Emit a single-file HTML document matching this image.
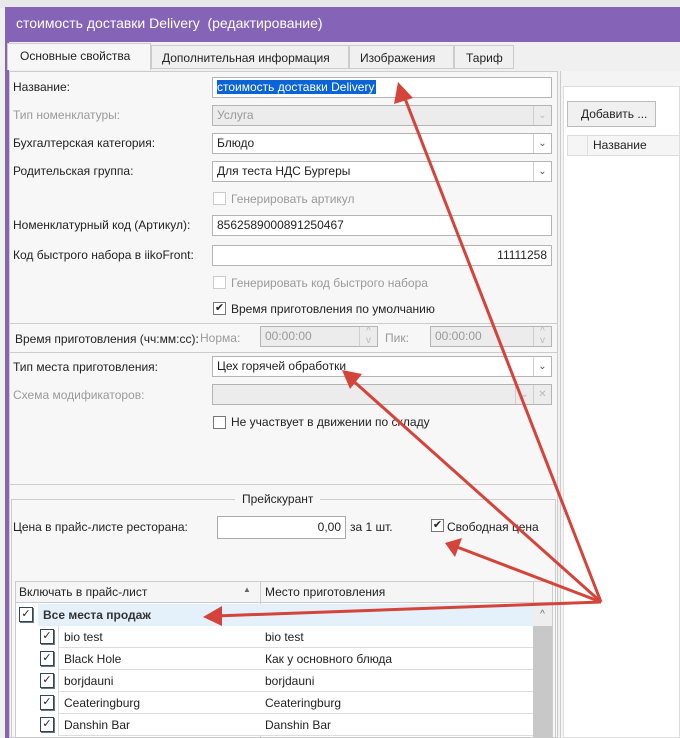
<!DOCTYPE html>
<html><head><meta charset="utf-8"><style>
*{box-sizing:border-box;margin:0;padding:0}
body{width:680px;height:738px;overflow:hidden;background:#f0f0f0;font-family:"Liberation Sans","DejaVu Sans",sans-serif;font-size:12px;color:#222;position:relative}
.a{position:absolute}
.lbl{position:absolute;left:13px;font-size:12px}
.dis{color:#9a9a9a}
.f{position:absolute;left:212px;width:340px;height:21px;border:1px solid #b4b4b4;background:#fff;padding:2px 4px;font-size:12px}
.f.g{background:#ececec;color:#999}
.dd{position:absolute;right:0;top:0;width:18px;height:19px;border-left:1px solid #d0d0d0;font-size:10px;color:#555;text-align:center;line-height:19px}
.cb{position:absolute;width:13px;height:13px;border:1px solid #777;background:#fff;font-size:11px;line-height:11px;text-align:center;color:#222}
.cb.d{border-color:#ccc}
.gcb{position:absolute;width:14px;height:15px;border:1px solid #345;background:#fff;font-size:11px;line-height:13px;text-align:center;font-weight:bold;box-shadow:1px 1px 0 #678}
.row{position:absolute;left:58px;width:475px;height:22px;border-bottom:1px solid #ddd;border-left:1px solid #ddd;background:#fff}
.row span{position:absolute;top:4px}
</style></head><body>
<div class="a" style="left:0;top:0;width:680px;height:8px;background:#e8e8e8"></div>
<div class="a" style="left:5px;top:7px;width:675px;height:35px;background:#8563b6"></div>
<div class="a" style="left:5px;top:7px;width:4px;height:731px;background:#8563b6"></div>
<div class="a" style="left:16px;top:15px;color:#fff;font-size:14px">стоимость доставки Delivery&nbsp; (редактирование)</div>
<div class="a" style="left:9px;top:42px;width:671px;height:696px;background:#f0f0f0"></div>
<div class="a" style="left:7px;top:43px;width:144px;height:27px;background:#f7f7f7;border:1px solid #ccc;border-bottom:none;padding:5px 0 0 12px">Основные свойства</div>
<div class="a" style="left:151px;top:45px;width:198px;height:24px;border:1px solid #ccc;padding:5px 0 0 10px">Дополнительная информация</div>
<div class="a" style="left:349px;top:45px;width:105px;height:24px;border:1px solid #ccc;padding:5px 0 0 10px">Изображения</div>
<div class="a" style="left:454px;top:45px;width:60px;height:24px;border:1px solid #ccc;padding:5px 0 0 11px">Тариф</div>
<div class="a" style="left:9px;top:71px;width:549px;height:667px;background:#f7f7f7;border:1px solid #ccc"></div>
<div class="a" style="left:560px;top:71px;width:120px;height:667px;background:#f4f4f4;border-left:1px solid #ccc"></div>
<div class="a" style="left:563px;top:86px;width:117px;height:652px;background:#fff;border:1px solid #ddd"></div>
<div class="a" style="left:567px;top:101px;width:89px;height:26px;border:1px solid #bbb;background:#f0f0f0;padding:5px 0 0 13px">Добавить ...</div>
<div class="a" style="left:567px;top:135px;width:113px;height:21px;border:1px solid #ddd;background:#f5f5f5"></div>
<div class="a" style="left:587px;top:135px;width:1px;height:21px;background:#ddd"></div>
<div class="a" style="left:593px;top:138px">Название</div>

<div class="lbl" style="top:80px">Название:</div>
<div class="f" style="top:77px"><span style="background:#0a64d6;color:#fff;padding:0 2px 0 0">стоимость доставки Delivery</span></div>
<div class="lbl dis" style="top:108px">Тип номенклатуры:</div>
<div class="f g" style="top:105px">Услуга<div class="dd" style="color:#bbb">⌄</div></div>
<div class="lbl" style="top:136px">Бухгалтерская категория:</div>
<div class="f" style="top:133px">Блюдо<div class="dd">⌄</div></div>
<div class="lbl" style="top:164px">Родительская группа:</div>
<div class="f" style="top:161px">Для теста НДС Бургеры<div class="dd">⌄</div></div>
<div class="cb d" style="left:213px;top:192px"></div><div class="a dis" style="left:231px;top:192px">Генерировать артикул</div>
<div class="lbl" style="top:218px">Номенклатурный код (Артикул):</div>
<div class="f" style="top:215px">8562589000891250467</div>
<div class="lbl" style="top:248px">Код быстрого набора в iikoFront:</div>
<div class="f" style="top:245px;text-align:right">11111258</div>
<div class="cb d" style="left:213px;top:276px"></div><div class="a dis" style="left:231px;top:276px">Генерировать код быстрого набора</div>
<div class="cb" style="left:213px;top:302px">✔</div><div class="a" style="left:231px;top:302px">Время приготовления по умолчанию</div>
<div class="a" style="left:10px;top:323px;width:547px;height:30px;border-top:1px solid #ccc;border-bottom:1px solid #ccc"></div>
<div class="lbl" style="top:332px;left:15px">Время приготовления (чч:мм:сс):</div>
<div class="a dis" style="left:200px;top:331px">Норма:</div>
<div class="f g" style="left:260px;top:326px;width:118px">00:00:00<div class="dd" style="color:#bbb;line-height:9px">^<br>v</div></div>
<div class="a dis" style="left:385px;top:331px">Пик:</div>
<div class="f g" style="left:430px;top:326px;width:122px">00:00:00<div class="dd" style="color:#bbb;line-height:9px">^<br>v</div></div>
<div class="lbl" style="top:360px">Тип места приготовления:</div>
<div class="f" style="top:356px">Цех горячей обработки<div class="dd">⌄</div></div>
<div class="lbl dis" style="top:388px">Схема модификаторов:</div>
<div class="f g" style="top:384px"><div class="dd" style="right:18px;color:#bbb">⌄</div><div class="dd" style="color:#bbb">✕</div></div>
<div class="cb" style="left:213px;top:416px"></div><div class="a" style="left:231px;top:415px">Не участвует в движении по складу</div>
<div class="a" style="left:9px;top:484px;width:549px;height:2px;border-top:1px solid #ccc"></div>
<div class="a" style="left:11px;top:499px;width:545px;height:239px;border:1px solid #ccc;border-bottom:none"></div>
<div class="a" style="left:235px;top:492px;background:#f7f7f7;padding:0 7px">Прейскурант</div>
<div class="a" style="left:13px;top:520px">Цена в прайс-листе ресторана:</div>
<div class="a" style="left:217px;top:516px;width:129px;height:23px;border:1px solid #aaa;background:#fff;text-align:right;padding:3px 4px">0,00</div>
<div class="a" style="left:350px;top:520px">за 1 шт.</div>
<div class="cb" style="left:431px;top:519px">✔</div><div class="a" style="left:447px;top:520px">Свободная цена</div>
<div class="a" style="left:15px;top:581px;width:538px;height:157px;border:1px solid #ccc;background:#fff"></div>
<div class="a" style="left:16px;top:582px;width:536px;height:21px;background:#f5f5f5;border-bottom:1px solid #ccc"></div>
<div class="a" style="left:19px;top:585px">Включать в прайс-лист</div>
<div class="a" style="left:243px;top:585px;font-size:8px;color:#666">▲</div>
<div class="a" style="left:260px;top:582px;width:1px;height:156px;background:#ccc"></div>
<div class="a" style="left:265px;top:585px">Место приготовления</div>
<div class="a" style="left:533px;top:582px;width:1px;height:21px;background:#ccc"></div>
<div class="a" style="left:38px;top:604px;width:495px;height:22px;background:#e4f0fa"></div>
<div class="a" style="left:16px;top:604px;width:22px;height:22px;background:#fff"></div>
<div class="a" style="left:533px;top:604px;width:19px;height:134px;background:#c8c8c8"></div>
<div class="a" style="left:533px;top:604px;width:19px;height:22px;background:#eee;text-align:center;color:#666;font-size:10px;line-height:22px">^</div>
<div class="gcb" style="left:19px;top:607px">✓</div>
<div class="a" style="left:43px;top:608px;font-weight:bold;color:#333">Все места продаж</div>
<div class="row" style="top:626px"><span style="left:5px">bio test</span><span style="left:206px">bio test</span></div>
<div class="row" style="top:648px"><span style="left:5px">Black Hole</span><span style="left:206px">Как у основного блюда</span></div>
<div class="row" style="top:670px"><span style="left:5px">borjdauni</span><span style="left:206px">borjdauni</span></div>
<div class="row" style="top:692px"><span style="left:5px">Ceateringburg</span><span style="left:206px">Ceateringburg</span></div>
<div class="row" style="top:714px"><span style="left:5px">Danshin Bar</span><span style="left:206px">Danshin Bar</span></div>
<div class="gcb" style="left:40px;top:629px">✓</div>
<div class="gcb" style="left:40px;top:651px">✓</div>
<div class="gcb" style="left:40px;top:673px">✓</div>
<div class="gcb" style="left:40px;top:695px">✓</div>
<div class="gcb" style="left:40px;top:717px">✓</div>
<svg class="a" style="left:0;top:0" width="680" height="738">
<g stroke="#d4443a" stroke-width="3" fill="#d4443a">
<line x1="601" y1="602" x2="404" y2="96"/>
<line x1="601" y1="602" x2="350" y2="378"/>
<line x1="601" y1="602" x2="457" y2="547"/>
<line x1="601" y1="602" x2="215" y2="616"/>
<polygon stroke="none" points="398,82 394,104 413,98"/>
<polygon stroke="none" points="342,370 350,389 362,374"/>
<polygon stroke="none" points="445,543 455,557 462,538"/>
<polygon stroke="none" points="203,617 222,606 222,626"/>
</g></svg>
</body></html>
